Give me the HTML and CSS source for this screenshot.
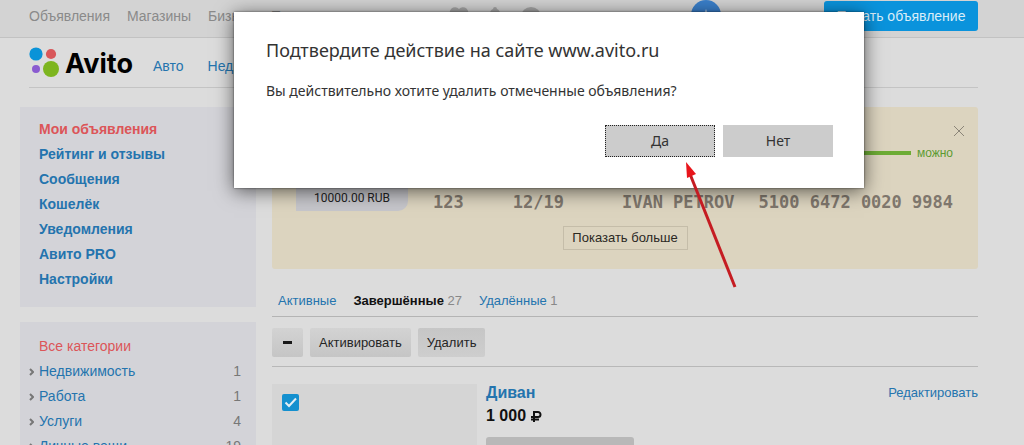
FILE: index.html
```html
<!DOCTYPE html>
<html lang="ru">
<head>
<meta charset="utf-8">
<meta name="viewport" content="width=device-width, initial-scale=1">
<title>Avito — Мои объявления</title>
<link rel="stylesheet" href="styles.css">
</head>
<body>
<div class="page">
  <header>
    <div class="topbar">
      <nav class="topbar-links">
        <a href="#">Объявления</a>
        <a href="#">Магазины</a>
        <a href="#">Бизнес</a>
        <a href="#">Помощь</a>
      </nav>
      <div class="topbar-user">
        <svg class="top-icon" viewBox="0 0 20 20" aria-hidden="true"><path d="M10 19 2 10a5 5 0 0 1 8-7 5 5 0 0 1 8 7z"/></svg>
        <svg class="top-icon" viewBox="0 0 20 20" aria-hidden="true"><path d="M3 16V14l2-2V8a5 5 0 0 1 3-5 2 2 0 0 1 4 0 5 5 0 0 1 3 5v4l2 2v2z"/></svg>
        <svg class="top-icon" viewBox="0 0 20 20" aria-hidden="true"><ellipse cx="10" cy="10" rx="10" ry="9"/></svg>
        <span class="avatar"><svg viewBox="0 0 30 30" aria-hidden="true"><circle cx="15" cy="15" r="15" fill="#3a7fca"/><path d="M15 9l5 12H10z" fill="#a9c4e0"/></svg></span>
      </div>
      <button class="post" type="button">Подать объявление</button>
    </div>
    <div class="brandbar">
      <a class="logo" href="#">
        <svg viewBox="0 0 30 30" aria-hidden="true"><circle cx="7" cy="7" r="6.6" fill="#0a93d8"/><circle cx="22" cy="7" r="5.1" fill="#d8575a"/><circle cx="7" cy="22" r="4" fill="#8a5bd0"/><circle cx="22" cy="22" r="8" fill="#7db51f"/></svg>
        <span>Avito</span>
      </a>
      <nav class="sections">
        <a href="#">Авто</a>
        <a href="#">Недвижимость</a>
      </nav>
    </div>
  </header>
  <div class="columns">
    <aside class="sidebar">
      <nav class="panel account">
        <a class="current" href="#">Мои объявления</a>
        <a href="#">Рейтинг и отзывы</a>
        <a href="#">Сообщения</a>
        <a href="#">Кошелёк</a>
        <a href="#">Уведомления</a>
        <a href="#">Авито PRO</a>
        <a href="#">Настройки</a>
      </nav>
      <nav class="panel categories">
        <div><a class="current" href="#">Все категории</a></div>
        <div><svg class="chevron" viewBox="0 0 5 8" aria-hidden="true"><path d="M1 1l3 3-3 3"/></svg><a href="#">Недвижимость</a><span>1</span></div>
        <div><svg class="chevron" viewBox="0 0 5 8" aria-hidden="true"><path d="M1 1l3 3-3 3"/></svg><a href="#">Работа</a><span>1</span></div>
        <div><svg class="chevron" viewBox="0 0 5 8" aria-hidden="true"><path d="M1 1l3 3-3 3"/></svg><a href="#">Услуги</a><span>4</span></div>
        <div><svg class="chevron" viewBox="0 0 5 8" aria-hidden="true"><path d="M1 1l3 3-3 3"/></svg><a href="#">Личные вещи</a><span>19</span></div>
      </nav>
    </aside>
    <main class="content">
      <section class="banner">
        <button class="close" type="button" aria-label="Закрыть"><svg viewBox="0 0 12 12" aria-hidden="true"><path d="M1 1l10 10M11 1 1 11"/></svg></button>
        <div class="scale"><i></i><span>можно</span></div>
        <div class="card-row">
          <div class="bubble">10000.00 RUB</div>
          <span class="cvc">123</span>
          <span class="expiry">12/19</span>
          <span class="holder">IVAN PETROV</span>
          <span class="number">5100 6472 0020 9984</span>
        </div>
        <button class="more" type="button">Показать больше</button>
      </section>
      <nav class="tabs">
        <a href="#">Активные</a>
        <span><b>Завершённые</b> 27</span>
        <span><a href="#">Удалённые</a> 1</span>
      </nav>
      <div class="toolbar">
        <button class="tool minus" type="button" aria-label="Снять выделение"><i></i></button>
        <button class="tool" type="button">Активировать</button>
        <button class="tool pressed" type="button">Удалить</button>
      </div>
      <article class="item">
        <div class="photo"><input type="checkbox" checked aria-label="Выбрать объявление «Диван»"></div>
        <div class="info">
          <a class="title" href="#">Диван</a>
          <p class="price">1 000 <svg viewBox="0 0 11 12" role="img" aria-label="₽"><path d="M3 12V2h4a2 2 0 0 1 0 5H0M0 9.500h8"/></svg></p>
          <div class="status"></div>
        </div>
        <a class="edit" href="#">Редактировать</a>
      </article>
    </main>
  </div>
</div>
<div class="dialog" role="dialog" aria-modal="true" aria-labelledby="dialog-title">
  <h1 id="dialog-title">Подтвердите действие на сайте www.avito.ru</h1>
  <p>Вы действительно хотите удалить отмеченные объявления?</p>
  <div class="actions">
    <button class="yes" type="button">Да</button>
    <button type="button">Нет</button>
  </div>
</div>
<svg class="arrow" viewBox="0 0 52 126" aria-hidden="true"><path d="M50 125 5 12" stroke="#c51c22" stroke-width="3" fill="none"/><path d="M1 0l10 12-9 4z" fill="#e8151b"/></svg>
</body>
</html>
```
FILE: styles.css
```css
* {
  box-sizing: border-box;
}

body {
  margin: 0;
  background: #dcdcdc;
  color: #111;
  font: 14px/16px "Liberation Sans", Arial, sans-serif;
}

a {
  color: #2474ae;
  text-decoration: none;
}

button {
  margin: 0;
  padding: 0;
  border: 0;
  font: inherit;
  color: inherit;
}

svg {
  display: block;
  flex: none;
}

.page {
  height: 100vh;
  overflow: hidden;
}

/* Header */

.topbar {
  display: flex;
  align-items: flex-start;
  height: 38px;
  padding: 1px 46px 0 29px;
  background: #d3d3d3;
  border-bottom: 1px solid #c2c2c2;
}

.topbar-links {
  display: flex;
  gap: 17px;
  padding-top: 7px;
}

.topbar-links a {
  color: #8a8a8a;
}

.topbar-user {
  display: flex;
  gap: 16px;
  margin-left: auto;
  padding-right: 103px;
}

.top-icon {
  width: 20px;
  height: 20px;
  margin-top: 5px;
  fill: #a5a5a5;
}

.avatar {
  width: 30px;
  margin: -1px 0 0 134px;
}

.post {
  width: 154px;
  height: 30px;
  border-radius: 3px;
  background: #0a93dc;
  color: #d9edf8;
}

.brandbar {
  display: flex;
  height: 50px;
  margin: 0 46px 0 29px;
  border-bottom: 1px solid #c4c4c4;
}

.logo {
  display: flex;
  gap: 6px;
  padding-top: 9px;
  color: #000;
  font: 700 27px/34px Inter, sans-serif;
}

.logo svg {
  width: 30px;
  height: 30px;
}

.sections {
  display: flex;
  gap: 24px;
  margin-left: 20px;
  padding-top: 20px;
}

/* Columns */

.columns {
  display: flex;
  gap: 16px;
  padding: 19px 46px 0 20px;
}

.sidebar {
  display: flex;
  flex: none;
  flex-direction: column;
  gap: 15px;
  width: 236px;
}

.panel {
  display: flex;
  flex-direction: column;
  background: #d3d3d8;
  line-height: 25px;
}

.account {
  padding: 10px 19px 15px;
  font-weight: 700;
}

.categories {
  padding: 12px 15px 12px 9px;
}

.categories div {
  display: flex;
  align-items: center;
}

.categories a {
  margin-left: 5px;
}

.categories .current {
  margin-left: 10px;
}

.categories span {
  margin-left: auto;
  color: #777;
}

.panel .current {
  color: #dc5558;
}

.chevron {
  width: 5px;
  height: 8px;
  fill: none;
  stroke: #777;
  stroke-width: 2;
}

.content {
  flex: 1;
  min-width: 0;
  font-size: 13px;
}

/* Card banner */

.banner {
  display: flex;
  flex-direction: column;
  padding: 18px 13px 19px;
  border-radius: 3px;
  background: #dcd4bf;
}

.close {
  align-self: flex-end;
  background: none;
}

.close svg {
  width: 12px;
  height: 12px;
  fill: none;
  stroke: #8b8578;
}

.scale {
  display: flex;
  align-items: center;
  gap: 6px;
  margin: 8px 12px 0 18px;
  color: #5d9b32;
  font-size: 12px;
}

.scale i {
  flex: 1;
  height: 4px;
  background: #6dac35;
}

.card-row {
  display: flex;
  align-items: flex-end;
  height: 50px;
  padding: 0 12px 0 11px;
  color: #7f776d;
  font: 700 17px/18px "DejaVu Sans Mono", monospace;
  white-space: nowrap;
}

.bubble {
  flex: none;
  width: 112px;
  padding: 16px 0 5px 18px;
  margin-right: 25px;
  border-radius: 10px 10px 10px 0;
  background: #c6c6cb;
  color: #222;
  font: 12px/16px Roboto, sans-serif;
}

.expiry {
  margin-left: 49px;
}

.holder {
  margin-left: auto;
}

.number {
  margin-left: 24px;
}

.more {
  align-self: center;
  width: 125px;
  height: 24px;
  margin-top: 15px;
  border: 1px solid #c5bda9;
  background: none;
  color: #2b281f;
}

/* Listing */

.tabs {
  display: flex;
  gap: 17px;
  padding: 24px 6px 7px;
  border-bottom: 1px solid #b4b4b4;
  color: #888;
}

.tabs b {
  color: #111;
}

.toolbar {
  display: flex;
  gap: 7px;
  padding: 11px 0 9px;
  border-bottom: 1px solid #b8b8b8;
}

.tool {
  height: 29px;
  padding: 0 9px;
  border-radius: 2px;
  background: linear-gradient(#d3d3d3, #c5c5c5);
  color: #252525;
}

.pressed {
  background: linear-gradient(#c6c6c6, #cecece);
}

.minus {
  display: grid;
  place-items: center;
  width: 31px;
}

.minus i {
  width: 9px;
  height: 3px;
  background: #181818;
}

.item {
  display: flex;
  padding-top: 17px;
}

.photo {
  flex: none;
  width: 205px;
  height: 150px;
  padding: 10px;
  background: #d5d5d5;
}

.photo input {
  display: block;
  width: 17px;
  height: 17px;
  margin: 0;
  appearance: none;
  border-radius: 2px;
  background: #1490cf url("data:image/svg+xml,%3Csvg xmlns='http://www.w3.org/2000/svg' viewBox='0 0 17 17'%3E%3Cpath d='M3.500 8.500l3.500 3.500 7-7.500' fill='none' stroke='%23e3eef4' stroke-width='2'/%3E%3C/svg%3E");
}

.info {
  margin-left: 9px;
}

.title {
  font-size: 16px;
  font-weight: 700;
  line-height: 18px;
}

.price {
  display: flex;
  align-items: center;
  gap: 5px;
  margin: 4px 0 11px;
  font-size: 16px;
  font-weight: 700;
  line-height: 20px;
}

.price svg {
  width: 11px;
  height: 12px;
  fill: none;
  stroke: #111;
  stroke-width: 2;
}

.status {
  width: 148px;
  height: 20px;
  border-radius: 3px;
  background: #b8b8b8;
}

.edit {
  margin-left: auto;
  padding-top: 1px;
}

/* Confirmation dialog and pointer */

.dialog {
  position: absolute;
  top: 12px;
  left: 234px;
  width: 630px;
  padding: 24px 31px 31px 32px;
  background: #fff;
  box-shadow: 0 3px 18px rgba(0, 0, 0, 0.6), 0 0 2px rgba(0, 0, 0, 0.6);
  color: #333;
  font: 14px/20px "Noto Sans", sans-serif;
}

.dialog h1 {
  margin: 0;
  font-size: 18px;
  font-weight: 400;
  line-height: 28px;
}

.dialog p {
  margin: 17px 0 24px;
}

.actions {
  display: flex;
  justify-content: flex-end;
  gap: 8px;
}

.actions button {
  width: 110px;
  height: 32px;
  background: #ccc;
}

.actions .yes {
  border: 1px dotted #222;
}

.arrow {
  position: absolute;
  top: 162px;
  left: 685px;
  width: 52px;
  height: 126px;
}
```
